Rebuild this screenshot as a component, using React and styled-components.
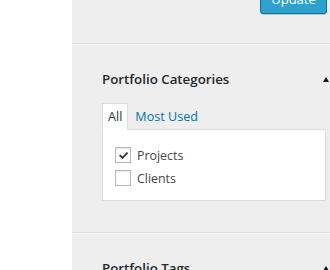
import React from "react";
import styled, { createGlobalStyle } from "styled-components";

const GlobalStyle = createGlobalStyle`
  html, body {
    margin: 0;
    padding: 0;
    width: 330px;
    height: 270px;
    overflow: hidden;
    background: #fff;
    font-family: "Open Sans", "Liberation Sans", sans-serif;
  }
`;

const Page = styled.div`
  display: flex;
  width: 330px;
  height: 270px;
  overflow: hidden;
`;

const Editor = styled.div`
  width: 72px;
  flex-shrink: 0;
  background: #fff;
`;

const Sidebar = styled.div`
  flex: 1;
  background: #eeeeee;
  display: flex;
  flex-direction: column;
`;

const PublishBox = styled.div`
  height: 43px;
  flex-shrink: 0;
  display: flex;
  justify-content: flex-end;
  align-items: flex-start;
  padding-right: 3px;
  border-bottom: 1px solid #dddddd;
  box-shadow: 0 1px 0 #f8f8f8;
`;

const UpdateButton = styled.button`
  margin-top: -15px;
  height: 29px;
  width: 67px;
  padding: 0;
  border: 1px solid #0074a2;
  border-radius: 3px;
  background: #2ea2cc;
  color: #fff;
  font-family: inherit;
  font-size: 13px;
  line-height: 27px;
  box-shadow: inset 0 1px 0 rgba(120, 200, 230, 0.5), 0 1px 0 rgba(0, 0, 0, 0.15);
`;

const Section = styled.div`
  flex-shrink: 0;
  padding: 25px 1px 31px 30px;
  border-bottom: ${(p) => (p.$last ? "none" : "1px solid #dddddd")};
  box-shadow: ${(p) => (p.$last ? "none" : "0 1px 0 #f8f8f8")};
`;

const SectionHead = styled.div`
  display: flex;
  align-items: center;
  justify-content: space-between;
`;

const Title = styled.h3`
  margin: 0;
  font-size: 13.3px;
  line-height: 20px;
  font-weight: 600;
  color: #23282d;
`;

const Toggle = styled.span`
  width: 0;
  height: 0;
  border-left: 3.5px solid transparent;
  border-right: 3.5px solid transparent;
  border-bottom: 5px solid #111;
`;

const Tabs = styled.div`
  display: flex;
  align-items: flex-end;
  margin-top: 14px;
  margin-right: 3px;
`;

const Tab = styled.span`
  position: relative;
  z-index: 1;
  padding: 4px 5px 3px;
  font-size: 12.6px;
  line-height: 18px;
  color: ${(p) => (p.$active ? "#32373c" : "#0073aa")};
  background: ${(p) => (p.$active ? "#fff" : "transparent")};
  border: 1px solid ${(p) => (p.$active ? "#dddddd" : "transparent")};
  border-bottom-color: ${(p) => (p.$active ? "#fff" : "transparent")};
  margin-bottom: -1px;
  margin-left: ${(p) => (p.$active ? "0" : "1px")};
`;

const Panel = styled.div`
  margin-right: 3px;
  background: #fff;
  border: 1px solid #dddddd;
  padding: 17px 12px 14px;
  display: flex;
  flex-direction: column;
  gap: 7px;
`;

const Row = styled.label`
  display: flex;
  align-items: center;
  gap: 6px;
  height: 16px;
  font-size: 12.4px;
  color: #444;
`;

const Box = styled.span`
  width: 14px;
  height: 14px;
  border: 1px solid #b4b9be;
  background: #fff;
  box-shadow: inset 0 1px 2px rgba(0, 0, 0, 0.1);
  display: flex;
  align-items: center;
  justify-content: center;
`;

const Check = () => (
  <svg width="13" height="13" viewBox="0 0 20 20">
    <path d="M3 10.5l2.2-2.2 3.3 3.3 6.7-7.1 2.2 2.2-8.9 9.2z" fill="#32373c" />
  </svg>
);

const categories = [
  { name: "Projects", checked: true },
  { name: "Clients", checked: false },
];

export default function App() {
  return (
    <Page>
      <GlobalStyle />
      <Editor />
      <Sidebar>
        <PublishBox>
          <UpdateButton>Update</UpdateButton>
        </PublishBox>
        <Section>
          <SectionHead>
            <Title>Portfolio Categories</Title>
            <Toggle />
          </SectionHead>
          <Tabs>
            <Tab $active>All</Tab>
            <Tab>Most Used</Tab>
          </Tabs>
          <Panel>
            {categories.map((c) => (
              <Row key={c.name}>
                <Box>{c.checked && <Check />}</Box>
                {c.name}
              </Row>
            ))}
          </Panel>
        </Section>
        <Section $last>
          <SectionHead>
            <Title>Portfolio Tags</Title>
            <Toggle />
          </SectionHead>
        </Section>
      </Sidebar>
    </Page>
  );
}
